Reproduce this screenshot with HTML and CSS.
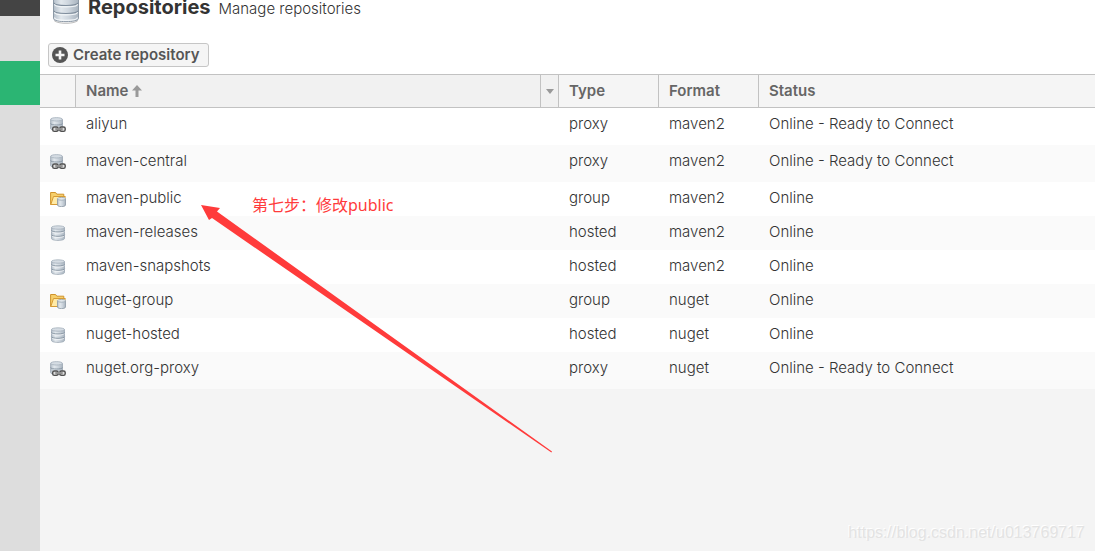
FILE: index.html
```html
<!DOCTYPE html>
<html lang="en">
<head>
<meta charset="utf-8">
<title>Repositories</title>
<link rel="stylesheet" href="styles.css">
</head>
<body>
<svg class="defs" aria-hidden="true">
  <defs>
    <linearGradient id="metal" x1="0" x2="1" y1="0" y2="0">
      <stop offset="0" stop-color="#b3bec9"/><stop offset=".3" stop-color="#e2e8ed"/><stop offset=".6" stop-color="#ced6de"/><stop offset="1" stop-color="#a9b4bf"/>
    </linearGradient>
    <symbol id="db" viewBox="0 0 16 16">
      <path d="M1.500 2.500v11c0 1.200 3 1.900 6.500 1.900s6.500-.7 6.500-1.900v-11z" fill="url(#metal)" stroke="#9aa6b2" stroke-width=".8"/>
      <path d="M1.500 5.500c0 2 13 2 13 0M1.500 9.800c0 2 13 2 13 0" fill="none" stroke="#8593a0" stroke-width="1"/>
      <path d="M2 6.600c0 2 12 2 12 0M2 10.900c0 2 12 2 12 0" fill="none" stroke="#f6f8fa" stroke-width=".8"/>
      <ellipse cx="8" cy="2.500" rx="6.500" ry="1.700" fill="#d5dce3" stroke="#a5b0bb" stroke-width=".8"/>
    </symbol>
    <symbol id="proxy" viewBox="0 0 16 16">
      <path d="M.6 2.500v9c0 1.200 2.600 2 5.900 2s6-.8 6-2v-9z" fill="url(#metal)" stroke="#9aa6b2" stroke-width=".8"/>
      <path d="M.6 6.500c0 2 11.900 2 11.900 0" fill="none" stroke="#8593a0" stroke-width=".9"/>
      <ellipse cx="6.500" cy="2.300" rx="5.900" ry="1.700" fill="#d5dce3" stroke="#a5b0bb" stroke-width=".8"/>
      <rect x="2.700" y="10" width="5.400" height="4.400" rx="1.600" fill="#ddd" stroke="#505050" stroke-width="1.400"/>
      <rect x="9.800" y="10" width="5.400" height="4.400" rx="1.600" fill="#ddd" stroke="#505050" stroke-width="1.400"/>
      <path d="M5.500 12.200h7" stroke="#505050" stroke-width="2.200"/><path d="M5.500 12h7" stroke="#ddd" stroke-width=".9"/>
    </symbol>
    <symbol id="group" viewBox="0 0 16 16">
      <path d="M.6 13.500V1.500h5l1.200 1.700h7v10.300z" fill="#f6cf6b" stroke="#cf932c"/>
      <path d="M.8 13.500L3.500 5.500h11.800l-2 8z" fill="#ffeaa6" stroke="#d69b35"/>
      <path d="M7.500 7.800v6.200c0 1 1.800 1.600 4 1.600s4-.6 4-1.600V7.800z" fill="url(#metal)" stroke="#8c98a4" stroke-width=".8"/>
      <ellipse cx="11.500" cy="7.800" rx="4" ry="1.400" fill="#e1e7ec" stroke="#98a4b0" stroke-width=".8"/>
    </symbol>
  </defs>
</svg>
<div class="app">
  <nav class="rail" aria-label="Sections"><div class="rail-top"></div><div class="rail-active"></div></nav>
  <main class="content">
    <header class="page-head">
      <svg class="head-icon" viewBox="0 0 28 24" aria-hidden="true">
        <path d="M2 19c0 5 24 5 24 0v1c0 5-24 5-24 0z" fill="#bbb"/>
        <path d="M1.500-6v24.500c0 4.200 25 4.200 25 0V-6z" fill="url(#metal)" stroke="#8d99a6"/>
        <path d="M2 2.800c0 3.600 24 3.600 24 0M2 10.800c0 3.600 24 3.600 24 0" fill="none" stroke="#7f8d9c" stroke-width="1.200"/>
        <path d="M2.500 4.200c0 3.600 23 3.600 23 0M2.500 12.200c0 3.600 23 3.600 23 0M2.500 17.500c0 3.800 23 3.800 23 0" fill="none" stroke="#f4f7f9" stroke-width="1.200"/>
      </svg>
      <h1>Repositories</h1>
      <p>Manage repositories</p>
    </header>
    <div class="toolbar">
      <button class="create" type="button">
        <svg class="plus" viewBox="0 0 16 16" aria-hidden="true"><circle cx="8" cy="8" r="8" fill="#555"/><path d="M8 3.500v9M3.500 8h9" stroke="#f5f5f5" stroke-width="2.600"/></svg>
        Create repository
      </button>
    </div>
    <table class="grid">
      <colgroup><col class="c-icon"><col class="c-name"><col class="c-menu"><col class="c-type"><col class="c-type"><col></colgroup>
      <thead>
        <tr>
          <th></th>
          <th class="sorted">Name <svg class="sort" viewBox="0 0 10 12" aria-hidden="true"><path d="M5 0l5 5.500H6.500V12h-3V5.500H0z" fill="#999"/></svg></th>
          <th class="menu-cell"><button class="menu" type="button" aria-label="Column menu"><svg viewBox="0 0 8 5" aria-hidden="true"><path d="M0 0h8L4 5z" fill="#999"/></svg></button></th>
          <th>Type</th><th>Format</th><th>Status</th>
        </tr>
      </thead>
      <tbody>
        <tr class="tall"><td><svg class="icon"><use href="#proxy"/></svg></td><td colspan="2">aliyun</td><td>proxy</td><td>maven2</td><td>Online - Ready to Connect</td></tr>
        <tr class="tall"><td><svg class="icon"><use href="#proxy"/></svg></td><td colspan="2">maven-central</td><td>proxy</td><td>maven2</td><td>Online - Ready to Connect</td></tr>
        <tr><td><svg class="icon"><use href="#group"/></svg></td><td colspan="2">maven-public</td><td>group</td><td>maven2</td><td>Online</td></tr>
        <tr><td><svg class="icon"><use href="#db"/></svg></td><td colspan="2">maven-releases</td><td>hosted</td><td>maven2</td><td>Online</td></tr>
        <tr><td><svg class="icon"><use href="#db"/></svg></td><td colspan="2">maven-snapshots</td><td>hosted</td><td>maven2</td><td>Online</td></tr>
        <tr><td><svg class="icon"><use href="#group"/></svg></td><td colspan="2">nuget-group</td><td>group</td><td>nuget</td><td>Online</td></tr>
        <tr><td><svg class="icon"><use href="#db"/></svg></td><td colspan="2">nuget-hosted</td><td>hosted</td><td>nuget</td><td>Online</td></tr>
        <tr class="tall"><td><svg class="icon"><use href="#proxy"/></svg></td><td colspan="2">nuget.org-proxy</td><td>proxy</td><td>nuget</td><td>Online - Ready to Connect</td></tr>
      </tbody>
    </table>
  </main>
</div>
<svg class="arrow" viewBox="0 0 352 248" aria-hidden="true"><path d="M0 0L19 3l-3 3.500L351 246.500l-.6 1L11 13l-3 2z" fill="#ff3b3b"/></svg>
<p class="note">第七步：修改public</p>
<p class="watermark">https://blog.csdn.net/u013769717</p>
</body>
</html>
```
FILE: styles.css
```css
* { box-sizing: border-box; }
body {
  margin: 0;
  position: relative;
  overflow: hidden;
  font: 300 15px/20px Inter, "Open Sans", sans-serif;
  color: #333;
  background: #f4f4f4;
}
h1, p { margin: 0; }
.defs { position: absolute; width: 0; height: 0; }
.app { display: flex; min-height: 100vh; }
.rail { flex: 0 0 40px; background: #ddd; }
.rail-top { height: 16px; background: #444; }
.rail-active { height: 44px; margin-top: 45px; background: #2bb573; }
.content { flex: 1; min-width: 0; }
.page-head {
  display: flex;
  align-items: flex-start;
  height: 24px;
  padding-left: 12px;
  background: #fff;
}
.head-icon { flex: none; width: 28px; height: 24px; margin-right: 8px; }
h1 { margin-right: 8px; font-size: 20px; line-height: 14px; font-weight: 700; }
.page-head p { line-height: 18px; }
.toolbar { padding: 19px 8px 7px; background: #fff; }
.create {
  display: flex;
  align-items: center;
  gap: 5px;
  height: 24px;
  padding: 0 8px 0 3px;
  border: 1px solid #c6c6c6;
  border-radius: 3px;
  background: #f5f5f5;
  color: #555;
  font: 600 15px/20px Inter, sans-serif;
}
.plus { width: 16px; height: 16px; }
.grid { width: 100%; border-collapse: separate; border-spacing: 0; table-layout: fixed; }
.c-icon { width: 36px; }
.c-name { width: 465px; }
.c-menu { width: 18px; }
.c-type { width: 100px; }
th {
  height: 34px;
  padding: 0 10px;
  border: solid #c2c2c2;
  border-width: 1px 1px 1px 0;
  background: #f5f5f5;
  color: #666;
  font-weight: 600;
  text-align: left;
}
th:last-child { border-right: 0; }
.sorted, .menu-cell { background: #f1f1f1; }
.menu-cell { padding: 0; }
.menu { display: flex; align-items: center; justify-content: center; width: 100%; height: 31px; padding: 0; border: 0; background: none; }
.menu svg { width: 8px; height: 5px; }
.sort { width: 10px; height: 12px; vertical-align: -1px; }
td { height: 34px; padding: 6px 10px 0; vertical-align: top; background: #fff; white-space: nowrap; }
.tall td { height: 37px; }
tbody tr:nth-child(even) td { background: #fafafa; }
.icon { display: block; width: 16px; height: 16px; margin-top: 3px; }
.arrow { position: absolute; left: 201px; top: 205px; width: 352px; height: 248px; }
.note { position: absolute; left: 252px; top: 195px; color: #ff3b3b; font: 400 16px/20px "Noto Sans", "Noto Sans CJK SC", sans-serif; }
.watermark { position: absolute; right: 10px; bottom: 8px; color: #e3e3e3; text-shadow: -1px -1px 0 #fff; font: 16px/20px "Liberation Sans", sans-serif; }
```
